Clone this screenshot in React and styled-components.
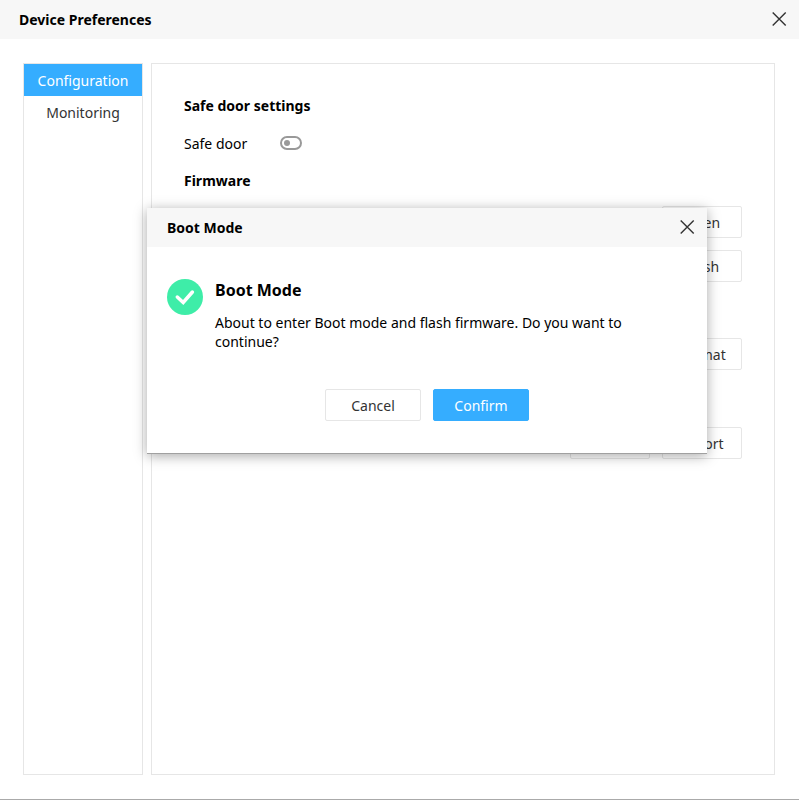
import React from 'react';
import styled, { createGlobalStyle } from 'styled-components';

const GlobalStyle = createGlobalStyle`
  * { box-sizing: border-box; }
  body { margin: 0; background: #fff; }
  body, button { font-family: "Noto Sans", sans-serif; font-size: 14px; }
  h1, h2, h3, p { margin: 0; }
`;

const Window = styled.div`
  position: relative;
  display: flex;
  flex-direction: column;
  min-height: 100vh;
  color: #000;
  background: #fff;
  border-bottom: 1px solid #aaa;
`;

const TitleBar = styled.header`
  display: flex;
  align-items: center;
  justify-content: space-between;
  height: 39px;
  padding: 0 12px 0 ${(p) => (p.$inset ? '20px' : '19px')};
  background: #f7f7f7;
`;

const Title = styled.h1`
  font-size: 14px;
  line-height: 20px;
  font-weight: 700;
`;

const IconButton = styled.button`
  display: flex;
  padding: 0;
  border: 0;
  background: none;
  color: #333;
  cursor: pointer;
`;

const Body = styled.main`
  flex: 1;
  display: flex;
  gap: 8px;
  padding: 24px 24px 24px 23px;
`;

const Sidebar = styled.nav`
  flex: none;
  width: 120px;
  border: 1px solid #e6e6e6;
`;

const NavItem = styled.button`
  display: block;
  width: 100%;
  height: 32px;
  padding: 0;
  border: 0;
  background: ${(p) => (p.$active ? '#35adff' : 'transparent')};
  color: ${(p) => (p.$active ? '#fff' : '#333')};
  cursor: pointer;
`;

const Panel = styled.section`
  flex: 1;
  min-width: 0;
  padding: 32px;
  border: 1px solid #e6e6e6;
`;

const Heading = styled.h2`
  font-size: 14px;
  line-height: 20px;
  font-weight: 700;
`;

const Field = styled.div`
  display: flex;
  align-items: center;
  margin: 18px 0 17px;
`;

const FieldLabel = styled.label`
  width: 96px;
  font-size: 14px;
  line-height: 20px;
`;

const Switch = styled.input`
  appearance: none;
  display: flex;
  align-items: center;
  width: 22px;
  height: 14px;
  margin: 0 0 2px;
  padding: 0 2px;
  border: 2px solid #999;
  border-radius: 7px;
  cursor: pointer;

  &::before {
    content: "";
    width: 6px;
    height: 6px;
    border-radius: 50%;
    background: #999;
  }

  &:checked {
    justify-content: flex-end;
  }
`;

const Actions = styled.div`
  display: flex;
  justify-content: ${(p) => (p.$center ? 'center' : 'flex-end')};
  gap: 12px;
  margin-top: ${(p) => p.$top};
`;

const Button = styled.button`
  width: ${(p) => (p.$wide ? '96px' : '80px')};
  height: 32px;
  padding: 0;
  border: 1px solid ${(p) => (p.$primary ? '#35adff' : '#e6e6e6')};
  border-radius: 2px;
  background: ${(p) => (p.$primary ? '#35adff' : '#fff')};
  color: ${(p) => (p.$primary ? '#fff' : '#333')};
  cursor: pointer;
`;

const Dialog = styled.div`
  position: absolute;
  top: 208px;
  left: 147px;
  width: 560px;
  padding-bottom: 32px;
  background: #fff;
  border-bottom: 1px solid #a0a0a0;
  box-shadow: 0 2px 12px rgba(0, 0, 0, 0.34);
`;

const Message = styled.div`
  display: flex;
  gap: 12px;
  padding: 32px 56px 0 20px;
`;

const MessageTitle = styled.h3`
  font-size: 16px;
  line-height: 22px;
  font-weight: 700;
`;

const MessageText = styled.p`
  margin-top: 12px;
  font-size: 14px;
  line-height: 19px;
`;

const StatusIcon = styled.svg`
  flex: none;
`;

function CloseButton({ label }) {
  return (
    <IconButton type="button" aria-label={label}>
      <svg width="15" height="15" viewBox="0 0 15 15" fill="none" stroke="currentColor" strokeWidth="1.4">
        <path d="M0.7 0.5 13.7 13.5M13.7 0.5 0.7 13.5" />
      </svg>
    </IconButton>
  );
}

export default function App() {
  return (
    <>
      <GlobalStyle />
      <Window>
        <TitleBar>
          <Title>Device Preferences</Title>
          <CloseButton label="Close window" />
        </TitleBar>
        <Body>
          <Sidebar>
            <NavItem type="button" $active>Configuration</NavItem>
            <NavItem type="button">Monitoring</NavItem>
          </Sidebar>
          <Panel>
            <Heading>Safe door settings</Heading>
            <Field>
              <FieldLabel htmlFor="safe-door">Safe door</FieldLabel>
              <Switch id="safe-door" type="checkbox" role="switch" />
            </Field>
            <Heading>Firmware</Heading>
            <Actions $top="15px"><Button type="button">Open</Button></Actions>
            <Actions $top="12px"><Button type="button">Flash</Button></Actions>
            <Actions $top="56px"><Button type="button">Format</Button></Actions>
            <Actions $top="57px">
              <Button type="button">Import</Button>
              <Button type="button">Export</Button>
            </Actions>
          </Panel>
        </Body>
        <Dialog role="dialog" aria-labelledby="dialog-title">
          <TitleBar $inset>
            <Title as="h2" id="dialog-title">Boot Mode</Title>
            <CloseButton label="Close dialog" />
          </TitleBar>
          <Message>
            <StatusIcon width="36" height="36" viewBox="0 0 36 36" fill="none" aria-hidden="true">
              <circle cx="18" cy="18" r="18" fill="#3eeda8" />
              <path
                d="M10.3 18 16.2 23.5 25.4 13"
                stroke="#fff"
                strokeWidth="3.5"
                strokeLinecap="round"
              />
            </StatusIcon>
            <div>
              <MessageTitle>Boot Mode</MessageTitle>
              <MessageText>
                About to enter Boot mode and flash firmware. Do you want to continue?
              </MessageText>
            </div>
          </Message>
          <Actions $center $top="38px">
            <Button type="button" $wide>Cancel</Button>
            <Button type="button" $wide $primary>Confirm</Button>
          </Actions>
        </Dialog>
      </Window>
    </>
  );
}
